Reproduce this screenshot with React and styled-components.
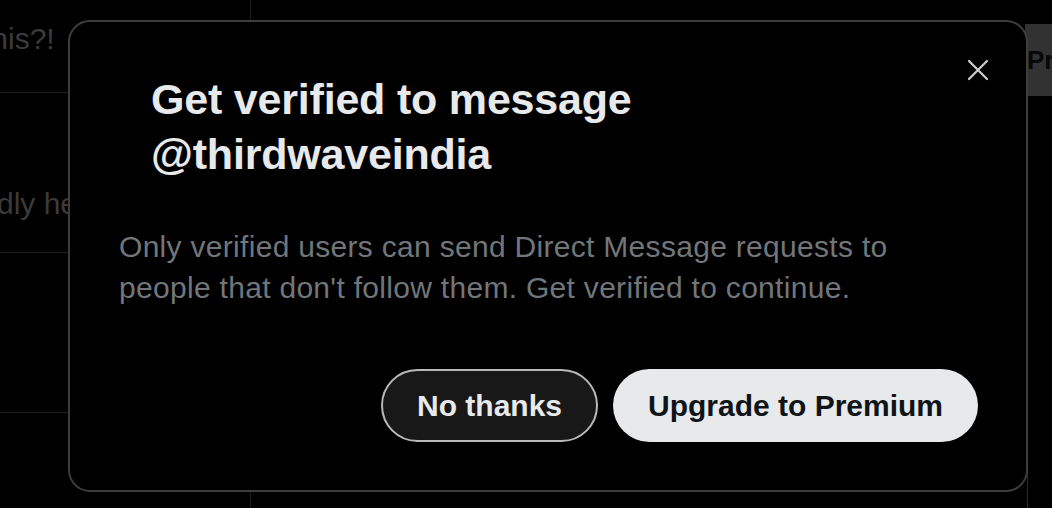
import React from "react";
import styled, { createGlobalStyle } from "styled-components";

const GlobalStyle = createGlobalStyle`
  html, body {
    margin: 0;
    padding: 0;
    background: #000000;
  }
  body {
    font-family: "Liberation Sans", Arial, sans-serif;
  }
`;

const Page = styled.div`
  display: grid;
  width: 1052px;
  height: 508px;
  overflow: hidden;
  background: #000000;
`;

const Backdrop = styled.div`
  grid-area: 1 / 1;
  display: flex;
  height: 100%;
`;

const Feed = styled.div`
  width: 250px;
  border-right: 1px solid #1e1e1e;
  display: flex;
  flex-direction: column;
  overflow: hidden;
`;

const FeedRow = styled.div`
  height: ${(props) => props.height}px;
  border-bottom: ${(props) => (props.last ? "none" : "1px solid #1e1e1e")};
  flex-shrink: 0;
  padding-top: ${(props) => props.top}px;
  box-sizing: border-box;
`;

const FeedText = styled.div`
  font-size: 30px;
  line-height: 34px;
  color: #3b3b3b;
  white-space: nowrap;
  margin-left: ${(props) => props.shift}px;
`;

const Middle = styled.div`
  flex: 1;
`;

const Side = styled.div`
  width: 27px;
  display: flex;
  flex-direction: column;
`;

const ProButton = styled.div`
  margin-top: 24px;
  height: 72px;
  background: #323232;
  color: #080808;
  font-weight: 700;
  font-size: 26px;
  line-height: 72px;
  padding-left: 2px;
  white-space: nowrap;
  overflow: hidden;
`;

const Rail = styled.div`
  flex: 1;
  border-left: 1px solid #2a2a2a;
  margin-left: 2px;
`;

const Overlay = styled.div`
  grid-area: 1 / 1;
  padding: 20px 0 0 68px;
`;

const Modal = styled.div`
  position: relative;
  box-sizing: border-box;
  width: 960px;
  height: 472px;
  background: #000000;
  border: 2px solid #3d3d3d;
  border-radius: 22px;
  padding: 50px 48px 48px 49px;
  display: flex;
  flex-direction: column;
`;

const CloseButton = styled.button`
  position: absolute;
  top: 30px;
  right: 30px;
  width: 36px;
  height: 36px;
  padding: 0;
  border: none;
  background: transparent;
  display: flex;
  align-items: center;
  justify-content: center;
  cursor: pointer;
`;

const Title = styled.h2`
  margin: 0 0 0 32px;
  font-size: 43px;
  line-height: 55px;
  font-weight: 700;
  color: #e7e9ea;
  letter-spacing: -0.2px;
`;

const Description = styled.p`
  margin: 44px 0 0 0;
  font-size: 30px;
  line-height: 41px;
  letter-spacing: 0.3px;
  color: #71767b;
`;

const Actions = styled.div`
  margin-top: auto;
  display: flex;
  justify-content: flex-end;
  gap: 15px;
`;

const ActionButton = styled.button`
  height: 73px;
  box-sizing: border-box;
  padding: 0;
  border-radius: 999px;
  font-family: "Liberation Sans", Arial, sans-serif;
  font-size: 30px;
  font-weight: 700;
  white-space: nowrap;
  cursor: pointer;
  border: ${(props) => (props.primary ? "none" : "2px solid #b9b9b9")};
  background: ${(props) => (props.primary ? "#e7e9ea" : "#181818")};
  color: ${(props) => (props.primary ? "#0f1419" : "#e7e9ea")};
  width: ${(props) => props.width}px;
`;

function CloseIcon() {
  return (
    <svg width="22" height="22" viewBox="0 0 22 22" fill="none">
      <path
        d="M2 2 L20 20 M20 2 L2 20"
        stroke="#cfcfcf"
        strokeWidth="2.2"
        strokeLinecap="round"
      />
    </svg>
  );
}

function App() {
  return (
    <Page>
      <GlobalStyle />
      <Backdrop>
        <Feed>
          <FeedRow height={93} top={22}>
            <FeedText shift={-17}>this?!</FeedText>
          </FeedRow>
          <FeedRow height={160} top={94}>
            <FeedText shift={-3}>dly help</FeedText>
          </FeedRow>
          <FeedRow height={160} top={0} />
          <FeedRow height={160} top={86} last>
            <FeedText shift={40}>...</FeedText>
          </FeedRow>
        </Feed>
        <Middle />
        <Side>
          <ProButton>Pro</ProButton>
          <Rail />
        </Side>
      </Backdrop>
      <Overlay>
        <Modal>
          <CloseButton type="button" aria-label="Close">
            <CloseIcon />
          </CloseButton>
          <Title>
            Get verified to message
            <br />
            @thirdwaveindia
          </Title>
          <Description>
            Only verified users can send Direct Message requests to
            <br />
            people that don't follow them. Get verified to continue.
          </Description>
          <Actions>
            <ActionButton type="button" width={217}>
              No thanks
            </ActionButton>
            <ActionButton type="button" primary width={365}>
              Upgrade to Premium
            </ActionButton>
          </Actions>
        </Modal>
      </Overlay>
    </Page>
  );
}

export default App;
